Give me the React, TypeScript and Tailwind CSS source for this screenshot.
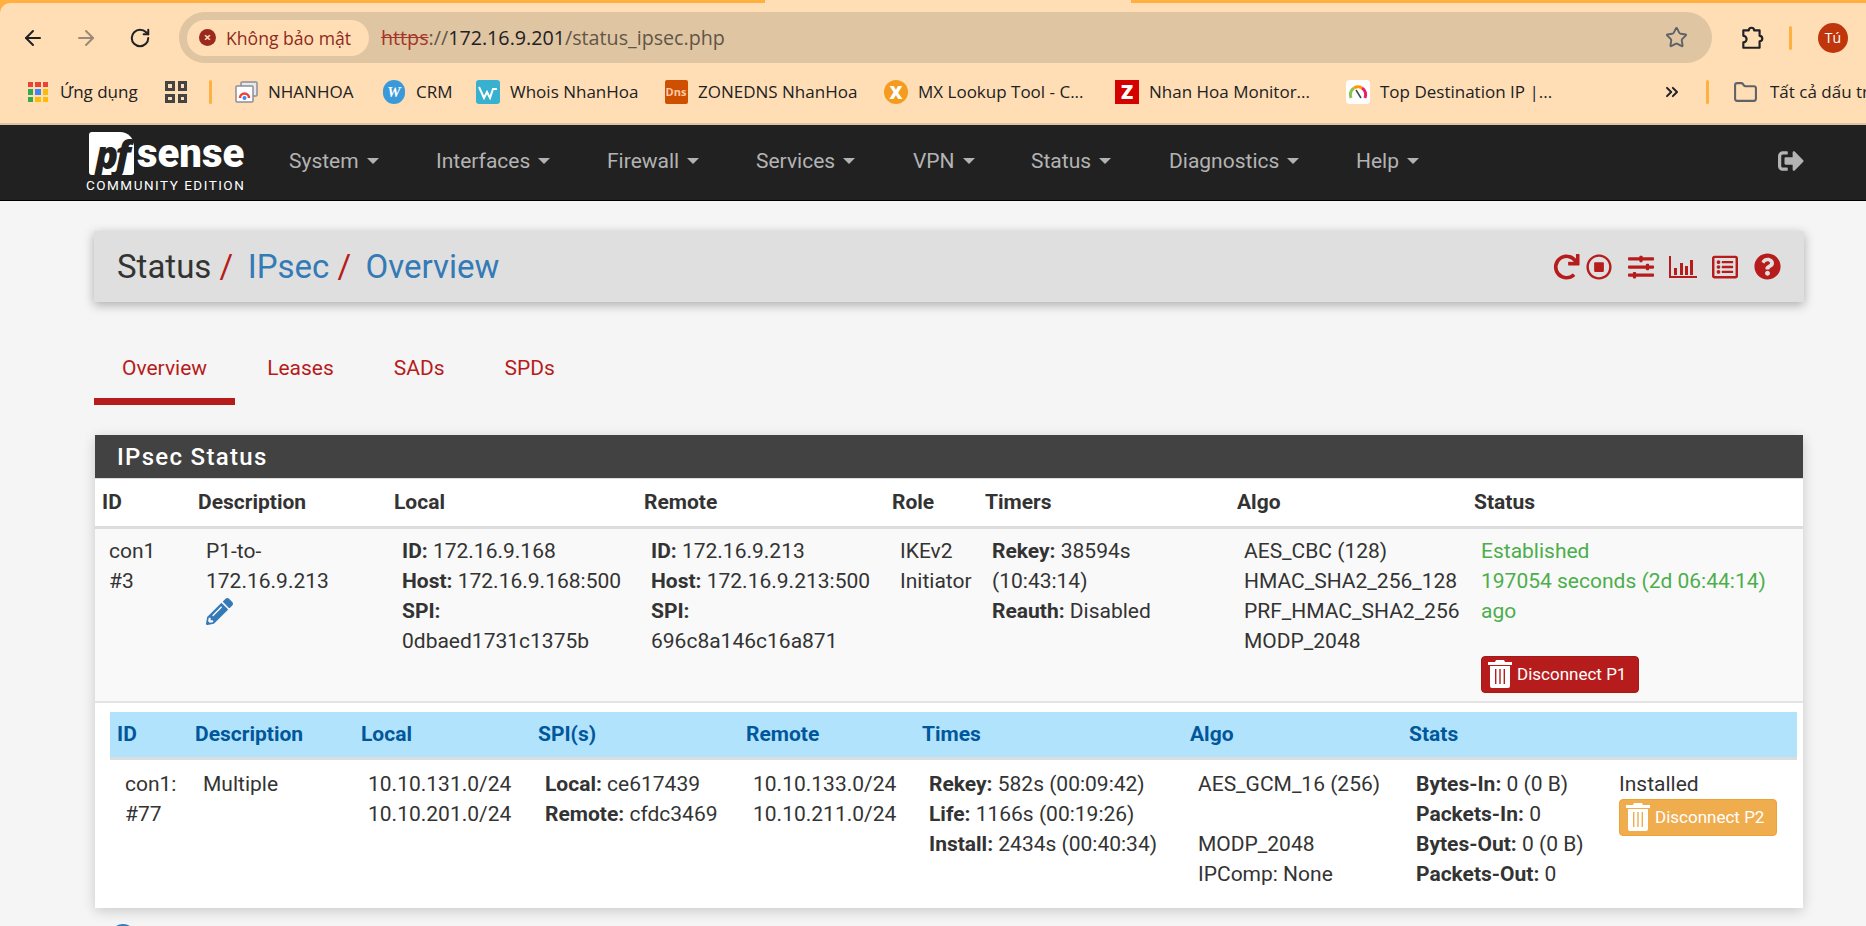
import React from "react";
import {
  ArrowLeft,
  ArrowRight,
  ChevronsRight,
  Folder,
  RotateCw,
  Star,
} from "lucide-react";
import {
  FaPencilAlt,
  FaQuestionCircle,
  FaRedo,
  FaRegListAlt,
  FaRegStopCircle,
  FaSignOutAlt,
  FaSlidersH,
} from "react-icons/fa";

const navMenuItems = [
  { label: "System", width: "w-[147px]" },
  { label: "Interfaces", width: "w-[171px]" },
  { label: "Firewall", width: "w-[149px]" },
  { label: "Services", width: "w-[157px]" },
  { label: "VPN", width: "w-[118px]" },
  { label: "Status", width: "w-[138px]" },
  { label: "Diagnostics", width: "w-[187px]" },
  { label: "Help", width: "w-[90px]" },
];

const phase1Columns = [
  { label: "ID", width: "w-[96px]" },
  { label: "Description", width: "w-[196px]" },
  { label: "Local", width: "w-[250px]" },
  { label: "Remote", width: "w-[248px]" },
  { label: "Role", width: "w-[93px]" },
  { label: "Timers", width: "w-[252px]" },
  { label: "Algo", width: "w-[237px]" },
  { label: "Status", width: "w-[336px]" },
];

const phase2Columns = [
  { label: "ID", width: "w-[78px]" },
  { label: "Description", width: "w-[166px]" },
  { label: "Local", width: "w-[177px]" },
  { label: "SPI(s)", width: "w-[208px]" },
  { label: "Remote", width: "w-[176px]" },
  { label: "Times", width: "w-[268px]" },
  { label: "Algo", width: "w-[219px]" },
  { label: "Stats", width: "w-[210px]" },
  { label: "", width: "w-[185px]" },
];

function BarChartIcon() {
  return (
    <svg width="28" height="22" viewBox="0 0 28 22" fill="#b71c1c">
      <rect x="0" y="0" width="2" height="22" />
      <rect x="0" y="20" width="28" height="2" />
      <rect x="5" y="12" width="3" height="7" />
      <rect x="11" y="7" width="3" height="12" />
      <rect x="16" y="10" width="3" height="9" />
      <rect x="21" y="4" width="3" height="15" />
    </svg>
  );
}

function TrashIcon() {
  return (
    <svg width="24" height="28" viewBox="0 0 24 28" fill="currentColor" className="shrink-0">
      <path d="M8 0h8l1 2h7v3H0V2h7z" />
      <path
        fillRule="evenodd"
        d="M2 6h20v20a2 2 0 0 1-2 2H4a2 2 0 0 1-2-2zM7 9v15h1.4V9zM11.3 9v15h1.4V9zM15.6 9v15H17V9z"
      />
    </svg>
  );
}

function DisconnectButton({ label, tone }: { label: string; tone: "red" | "amber" }) {
  const toneClasses =
    tone === "red"
      ? "bg-[#b71c1c] border-[#a51919]"
      : "bg-[#f0ad4e] border-[#eea236]";
  return (
    <span
      className={`flex h-[37px] w-[158px] items-center gap-[5px] rounded-[4px] border pl-[6px] text-[17px] text-white ${toneClasses}`}
    >
      <TrashIcon />
      {label}
    </span>
  );
}

function BookmarkItem({
  icon,
  label,
  width,
}: {
  icon: React.ReactNode;
  label: string;
  width: string;
}) {
  return (
    <div className={`flex shrink-0 items-center gap-[10px] ${width}`}>
      <span className="flex h-6 w-6 shrink-0 items-center justify-center">{icon}</span>
      <span className="whitespace-nowrap">{label}</span>
    </div>
  );
}

function AppsIcon() {
  const dotColours = [
    "#ea4335", "#ea4335", "#ea4335",
    "#34a853", "#4285f4", "#fbbc05",
    "#34a853", "#fbbc05", "#fbbc05",
  ];
  return (
    <span className="grid h-5 w-5 grid-cols-3 gap-[2px]">
      {dotColours.map((dotColour, dotIndex) => (
        <span key={dotIndex} style={{ backgroundColor: dotColour }} />
      ))}
    </span>
  );
}

function NhanHoaFavicon() {
  return (
    <svg width="23" height="22" viewBox="0 0 23 22">
      <rect x="6" y="1" width="16" height="14" rx="1" fill="#e8e8e8" stroke="#8a8f98" strokeWidth="1.5" />
      <rect x="1" y="5" width="17" height="16" rx="1" fill="#fff" stroke="#8a8f98" strokeWidth="1.5" />
      <path d="M5 17a4.5 4.5 0 0 1 9 0" fill="none" stroke="#ea4335" strokeWidth="2.5" />
      <circle cx="9.5" cy="17" r="2" fill="#4285f4" />
    </svg>
  );
}

function WhoisFavicon() {
  return (
    <svg width="24" height="24" viewBox="0 0 24 24">
      <rect width="24" height="24" rx="3" fill="#38b0cf" />
      <path d="M3 7l5 11 3-6 3 6 3-9h4" fill="none" stroke="#fff" strokeWidth="2" />
    </svg>
  );
}

function BrowserChrome() {
  return (
    <div className="bg-[#ffb040]">
      <div className="flex h-[3px]">
        <div className="w-[765px]" />
        <div className="w-[366px] bg-[#ffdeb5]" />
      </div>
      <div className="h-[122px] rounded-tl-[10px] bg-[#ffdeb5]">
        {/* Address row */}
        <div className="flex h-[69px] items-center text-[#202124]">
          <ArrowLeft className="ml-[21px] h-[24px] w-[24px]" strokeWidth={2} />
          <ArrowRight className="ml-[29px] h-[24px] w-[24px] text-[#9a8a78]" strokeWidth={2} />
          <RotateCw className="ml-[31px] h-[22px] w-[22px]" strokeWidth={2.2} />
          <div className="ml-[28px] flex h-[51px] w-[1533px] items-center rounded-full bg-[#dfc5a2] pl-[8px]">
            <div className="flex h-[36px] w-[182px] items-center rounded-full bg-[#ffdeb5] pl-[12px] text-[17.6px] font-medium text-[#8f2a20]">
              <span className="flex h-[17px] w-[17px] shrink-0 items-center justify-center rounded-full bg-[#9a2a1f] text-[13px] font-bold leading-none text-[#ffdeb5]">
                ×
              </span>
              <span className="ml-[10px] whitespace-nowrap">Không bảo mật</span>
            </div>
            <div className="ml-[12px] text-[19.7px] whitespace-nowrap text-[#5f5548]">
              <span className="text-[#a3352a] line-through">https</span>
              <span>://</span>
              <span className="text-[#202124]">172.16.9.201</span>
              <span>/status_ipsec.php</span>
            </div>
            <Star className="ml-auto mr-[24px] h-[23px] w-[23px] text-[#5f6368]" strokeWidth={2} />
          </div>
          <svg className="ml-[27px]" width="26" height="26" viewBox="0 0 24 24" fill="none" stroke="#202124" strokeWidth="2">
            <path d="M4 5h5a2.5 2.5 0 0 1 5 0h5v5a2.5 2.5 0 0 1 0 5v6H4v-5a2.5 2.5 0 0 0 0-6z" strokeLinejoin="round" />
          </svg>
          <div className="ml-[24px] h-[24px] w-[3px] rounded bg-[#ffb040]" />
          <div className="ml-[26px] flex h-[30px] w-[30px] items-center justify-center rounded-full bg-[#bf360c] text-[14px] text-white">
            Tú
          </div>
        </div>

        {/* Bookmarks row */}
        <div className="flex h-[53px] items-center overflow-hidden border-b-2 border-[#dcc3a4] pb-[11px] pl-[28px] text-[17px] text-[#202124]">
          <span className="flex w-[32px] shrink-0"><AppsIcon /></span>
          <span className="w-[105px] shrink-0">Ứng dụng</span>
          <span className="grid h-[22px] w-[22px] shrink-0 grid-cols-2 gap-[3px]">
            <span className="border-[3px] border-[#444]" />
            <span className="border-[3px] border-[#444]" />
            <span className="border-[3px] border-[#444]" />
            <span className="border-[3px] border-[#444]" />
          </span>
          <span className="ml-[22px] mr-[22px] h-[24px] w-[3px] shrink-0 rounded bg-[#ffb040]" />
          <BookmarkItem width="w-[148px]" label="NHANHOA" icon={<NhanHoaFavicon />} />
          <BookmarkItem
            width="w-[94px]"
            label="CRM"
            icon={
              <span className="flex h-[24px] w-[22px] items-center justify-center rounded-full bg-[#3a99d8] font-['Liberation_Serif',serif] text-[15px] font-bold italic text-white">
                W
              </span>
            }
          />
          <BookmarkItem width="w-[188px]" label="Whois NhanHoa" icon={<WhoisFavicon />} />
          <BookmarkItem
            width="w-[220px]"
            label="ZONEDNS NhanHoa"
            icon={
              <span className="flex h-[24px] w-[23px] items-center justify-center rounded-[2px] bg-[#cf4f00] text-[11px] font-bold text-[#ffc9a8]">
                Dns
              </span>
            }
          />
          <BookmarkItem
            width="w-[231px]"
            label="MX Lookup Tool - C..."
            icon={
              <span className="flex h-[24px] w-[24px] items-center justify-center rounded-full bg-[#f39c1f] text-[18px] font-black leading-none text-white">
                X
              </span>
            }
          />
          <BookmarkItem
            width="w-[231px]"
            label="Nhan Hoa Monitor..."
            icon={
              <span className="flex h-[24px] w-[24px] items-center justify-center bg-[#d50000] text-[20px] font-black leading-none text-white">
                Z
              </span>
            }
          />
          <BookmarkItem
            width="w-[316px]"
            label="Top Destination IP |..."
            icon={
              <span className="flex h-[24px] w-[24px] items-center justify-center rounded-[4px] bg-white">
                <svg width="20" height="20" viewBox="0 0 20 20" fill="none" strokeWidth="3">
                  <path d="M3 16a8 8 0 0 1 3-10" stroke="#8bc34a" />
                  <path d="M6 6a8 8 0 0 1 8 0" stroke="#ff9800" />
                  <path d="M14 6a8 8 0 0 1 3 10" stroke="#e91e63" />
                  <path d="M8 8l5 8" stroke="#37474f" strokeWidth="1.5" />
                </svg>
              </span>
            }
          />
          <ChevronsRight className="h-[20px] w-[20px] shrink-0" strokeWidth={2.4} />
          <span className="ml-[24px] mr-[24px] h-[24px] w-[3px] shrink-0 rounded bg-[#ffb040]" />
          <Folder className="mr-[12px] h-[25px] w-[25px] shrink-0 text-[#5f6368]" strokeWidth={2} />
          <span className="whitespace-nowrap">Tất cả dấu trang</span>
        </div>
      </div>
    </div>
  );
}

function TopNavbar() {
  return (
    <nav className="flex h-[76px] items-center border-b border-black bg-[#212121] pl-[86px] text-[21px] text-[#b3b3b3]">
      <div className="w-[203px] shrink-0">
        <div className="flex h-[43px] items-center pl-[3px]">
          <span className="flex h-[43px] w-[45px] items-center justify-center rounded-[3px] rounded-tr-[14px] bg-white font-['Open_Sans',sans-serif] text-[38px] font-extrabold italic leading-[40px] tracking-[-3px] text-[#212121]">
            pf
          </span>
          <span className="ml-[3px] text-[40px] font-black leading-none text-white">
            sense
          </span>
        </div>
        <div className="mt-[2px] text-[13.5px] leading-[16px] tracking-[1.5px] whitespace-nowrap text-white">
          COMMUNITY EDITION
        </div>
      </div>
      {navMenuItems.map((navItem) => (
        <div key={navItem.label} className={`mb-[4px] flex shrink-0 items-center ${navItem.width}`}>
          {navItem.label}
          <span className="ml-[8px] h-0 w-0 border-x-[6px] border-t-[6px] border-x-transparent border-t-[#b3b3b3]" />
        </div>
      ))}
      <FaSignOutAlt className="mb-[4px] ml-[331px] h-[26px] w-[28px] text-[#b3b3b3]" />
    </nav>
  );
}

function PageHeader() {
  return (
    <div className="ml-[94px] mr-[62px] mt-[30px] flex h-[71px] items-center justify-between bg-[#dfdfdf] pl-[23px] pr-[23px] shadow-[0_3px_10px_rgba(0,0,0,0.3)]">
      <h1 className="text-[33px] leading-none whitespace-nowrap text-[#333]">
        Status <span className="text-[#b71c1c]">/</span>
        <span className="ml-[14.5px] text-[#337ab7]">IPsec</span>{" "}
        <span className="text-[#b71c1c]">/</span>
        <span className="ml-[14.5px] text-[#337ab7]">Overview</span>
      </h1>
      <div className="flex items-center text-[#b71c1c]">
        <FaRedo className="h-[26px] w-[27px]" />
        <FaRegStopCircle className="ml-[6px] h-[26px] w-[26px]" />
        <FaSlidersH className="ml-[15px] h-[26px] w-[28px]" />
        <span className="ml-[14px] flex"><BarChartIcon /></span>
        <FaRegListAlt className="ml-[14px] h-[26px] w-[28px]" />
        <FaQuestionCircle className="ml-[15px] h-[27px] w-[27px]" />
      </div>
    </div>
  );
}

function SectionTabs() {
  const tabLabels = ["Overview", "Leases", "SADs", "SPDs"];
  return (
    <div className="ml-[94px] mt-[40px] flex gap-[4px] text-[#b71c1c]">
      {tabLabels.map((tabLabel, tabIndex) => (
        <div
          key={tabLabel}
          className={`h-[63px] px-[28px] pt-[11px] ${tabIndex === 0 ? "border-b-[7px] border-[#b71c1c]" : ""}`}
        >
          {tabLabel}
        </div>
      ))}
    </div>
  );
}

function Phase1Row() {
  return (
    <tr className="border-b-2 border-[#e4e4e4] bg-[#f9f9f9] align-top">
      <td className="h-[175px] pl-[14px] pt-[7px]">
        con1
        <br />
        #3
      </td>
      <td className="pl-[15px] pt-[7px]">
        P1-to-
        <br />
        172.16.9.213
        <FaPencilAlt className="mt-[2px] h-[27px] w-[27px] text-[#337ab7]" />
      </td>
      <td className="pl-[15px] pt-[7px]">
        <b className="font-bold">ID:</b> 172.16.9.168
        <br />
        <b className="font-bold">Host:</b> 172.16.9.168:500
        <br />
        <b className="font-bold">SPI:</b>
        <br />
        0dbaed1731c1375b
      </td>
      <td className="pl-[14px] pt-[7px]">
        <b className="font-bold">ID:</b> 172.16.9.213
        <br />
        <b className="font-bold">Host:</b> 172.16.9.213:500
        <br />
        <b className="font-bold">SPI:</b>
        <br />
        696c8a146c16a871
      </td>
      <td className="pl-[15px] pt-[7px]">
        IKEv2
        <br />
        Initiator
      </td>
      <td className="pl-[14px] pt-[7px]">
        <b className="font-bold">Rekey:</b> 38594s
        <br />
        (10:43:14)
        <br />
        <b className="font-bold">Reauth:</b> Disabled
      </td>
      <td className="pl-[14px] pt-[7px]">
        AES_CBC (128)
        <br />
        HMAC_SHA2_256_128
        <br />
        PRF_HMAC_SHA2_256
        <br />
        MODP_2048
      </td>
      <td className="pl-[14px] pt-[7px]">
        <div className="text-[#4cae4c]">
          Established
          <br />
          197054 seconds (2d 06:44:14)
          <br />
          ago
        </div>
        <div className="mt-[30px]">
          <DisconnectButton label="Disconnect P1" tone="red" />
        </div>
      </td>
    </tr>
  );
}

function Phase2Table() {
  return (
    <table className="w-[1687px] table-fixed border-collapse">
      <thead>
        <tr className="h-[46px] border-b-[3px] border-[#ddd] bg-[#b2e3fc] text-left text-[#01579b]">
          {phase2Columns.map((column, columnIndex) => (
            <th key={columnIndex} className={`pl-[7px] font-bold ${column.width}`}>
              {column.label}
            </th>
          ))}
        </tr>
      </thead>
      <tbody>
        <tr className="align-top">
          <td className="pl-[15px] pt-[9px]">
            con1:
            <br />
            #77
          </td>
          <td className="pl-[15px] pt-[9px]">Multiple</td>
          <td className="pl-[14px] pt-[9px]">
            10.10.131.0/24
            <br />
            10.10.201.0/24
          </td>
          <td className="pl-[14px] pt-[9px]">
            <b className="font-bold">Local:</b> ce617439
            <br />
            <b className="font-bold">Remote:</b> cfdc3469
          </td>
          <td className="pl-[14px] pt-[9px]">
            10.10.133.0/24
            <br />
            10.10.211.0/24
          </td>
          <td className="pl-[14px] pt-[9px]">
            <b className="font-bold">Rekey:</b> 582s (00:09:42)
            <br />
            <b className="font-bold">Life:</b> 1166s (00:19:26)
            <br />
            <b className="font-bold">Install:</b> 2434s (00:40:34)
          </td>
          <td className="pl-[15px] pt-[9px]">
            AES_GCM_16 (256)
            <br />
            <br />
            MODP_2048
            <br />
            IPComp: None
          </td>
          <td className="pl-[14px] pt-[9px]">
            <b className="font-bold">Bytes-In:</b> 0 (0 B)
            <br />
            <b className="font-bold">Packets-In:</b> 0
            <br />
            <b className="font-bold">Bytes-Out:</b> 0 (0 B)
            <br />
            <b className="font-bold">Packets-Out:</b> 0
          </td>
          <td className="pl-[7px] pt-[9px]">
            Installed
            <DisconnectButton label="Disconnect P2" tone="amber" />
          </td>
        </tr>
      </tbody>
    </table>
  );
}

function IpsecStatusPanel() {
  return (
    <section className="ml-[95px] mr-[63px] mt-[30px] bg-white shadow-[0_3px_12px_rgba(0,0,0,0.18)]">
      <h2 className="flex h-[44px] items-center border-b border-[#ddd] bg-[#424242] pl-[22px] text-[24px] font-medium tracking-[1.3px] text-white">
        IPsec Status
      </h2>
      <table className="w-[1708px] table-fixed border-collapse">
        <thead>
          <tr className="h-[48px] border-b-[3px] border-[#ddd] text-left">
            {phase1Columns.map((column) => (
              <th key={column.label} className={`pl-[7px] font-bold ${column.width}`}>
                {column.label}
              </th>
            ))}
          </tr>
        </thead>
        <tbody>
          <Phase1Row />
          <tr>
            <td colSpan={8} className="h-[206px] pl-[15px] pr-[6px] pt-[9px] align-top">
              <Phase2Table />
            </td>
          </tr>
        </tbody>
      </table>
    </section>
  );
}

export default function App() {
  return (
    <div className="h-[926px] overflow-hidden bg-[#f5f5f5] font-['Roboto',sans-serif] text-[21px] leading-[30px] text-[#333]">
      <div className="font-['Open_Sans',sans-serif]">
        <BrowserChrome />
      </div>
      <TopNavbar />
      <PageHeader />
      <SectionTabs />
      <IpsecStatusPanel />
      <div className="ml-[110px] mt-[16px] h-[26px] w-[26px] rounded-full bg-[#337ab7]" />
    </div>
  );
}
